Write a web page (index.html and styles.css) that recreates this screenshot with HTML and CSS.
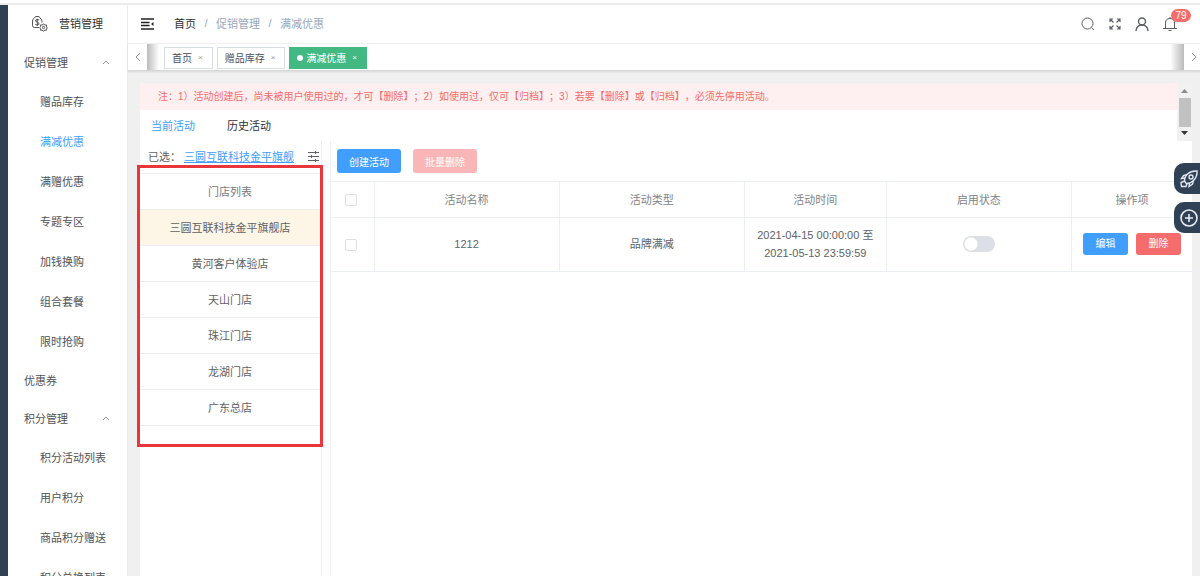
FILE: index.html
```
<!DOCTYPE html>
<html lang="zh-CN">

<head>
    <meta charset="UTF-8">
    <meta name="viewport" content="width=device-width, initial-scale=1.0">
    <title>满减优惠</title>
    <link rel="stylesheet" href="styles.css">
</head>

<body>
    <div class="app">
        <div class="rail"></div>
        <!-- 左侧菜单 -->
        <nav class="sidebar">
            <div class="logo">
                <svg width="17" height="17" viewBox="0 0 17 17" fill="none" stroke="#555" stroke-width="1">
                    <path d="M8 12.500H3.500Q1.500 12.500 1.500 10.500V6Q1.500 4 3.500 3L4.500 1.500H8L9 3Q11 4 11 6.500V7.500" />
                    <path d="M8.300 5Q6.300 4 4.800 5Q4 6.500 6.300 7.200Q8.800 8 7.800 9.500Q6.300 10.500 4.300 9.500M6.300 3.500V11" />
                    <circle cx="12.500" cy="12.500" r="1.200" />
                    <path d="M12.500 9L14 10H15.500V12L16.300 12.800L15.500 14V15.200H14L12.500 16.200L11 15.200H9.500V13.800L8.800 12.600L9.500 11.500V10H11Z" />
                </svg>
                <span>营销管理</span>
            </div>
            <ul class="menu">
                <li>
                    <a class="menu-title" href="#">促销管理<svg width="8" height="5" viewBox="0 0 8 5"><path d="M1 4L4 1L7 4" /></svg></a>
                    <ul>
                        <li><a href="#">赠品库存</a></li>
                        <li><a class="active" href="#">满减优惠</a></li>
                        <li><a href="#">满赠优惠</a></li>
                        <li><a href="#">专题专区</a></li>
                        <li><a href="#">加钱换购</a></li>
                        <li><a href="#">组合套餐</a></li>
                        <li><a href="#">限时抢购</a></li>
                    </ul>
                </li>
                <li><a class="menu-title" href="#">优惠券</a></li>
                <li>
                    <a class="menu-title" href="#">积分管理<svg width="8" height="5" viewBox="0 0 8 5"><path d="M1 4L4 1L7 4" /></svg></a>
                    <ul>
                        <li><a href="#">积分活动列表</a></li>
                        <li><a href="#">用户积分</a></li>
                        <li><a href="#">商品积分赠送</a></li>
                        <li><a href="#">积分兑换列表</a></li>
                    </ul>
                </li>
            </ul>
        </nav>

        <div class="main">
            <!-- 顶部 -->
            <header class="header">
                <button class="icon-btn" type="button" aria-label="折叠菜单">
                    <svg width="13" height="12" viewBox="0 0 13 12" fill="none" stroke="#222" stroke-width="1.400">
                        <path d="M0 1H13M0 4.500H8.500M0 7.500H8.500M0 11H13" />
                        <path d="M12.500 4V8L10 6Z" fill="#222" stroke="none" />
                    </svg>
                </button>
                <div class="crumbs">
                    <a class="home" href="#">首页</a><i>/</i><span>促销管理</span><i>/</i><span>满减优惠</span>
                </div>
                <div class="tools">
                    <button class="icon-btn" type="button" aria-label="搜索">
                        <svg width="14" height="14" viewBox="0 0 14 14" fill="none" stroke="#5a5e66"><circle cx="6.500" cy="6.500" r="5.500" /><path d="M10.500 10.500L13 13" /></svg>
                    </button>
                    <button class="icon-btn" type="button" aria-label="全屏">
                        <svg width="12" height="12" viewBox="0 0 12 12" fill="none" stroke="#5a5e66" stroke-width="1.200"><path d="M1 4V1H4M1 1L4.500 4.500M8 1H11V4M11 1L7.500 4.500M1 8V11H4M1 11L4.500 7.500M8 11H11V8M11 11L7.500 7.500" /></svg>
                    </button>
                    <button class="icon-btn" type="button" aria-label="用户">
                        <svg width="14" height="14" viewBox="0 0 14 14" fill="none" stroke="#5a5e66" stroke-width="1.400"><circle cx="7" cy="4.500" r="3.500" /><path d="M1 14Q1.500 8 7 8Q12.500 8 13 14" /></svg>
                    </button>
                    <button class="icon-btn bell" type="button" aria-label="通知">
                        <svg width="14" height="14" viewBox="0 0 14 14" fill="none" stroke="#5a5e66"><path d="M7 0V1.500M2.500 11.500V6Q2.500 1.500 7 1.500Q11.500 1.500 11.500 6V11.500M0 11.500H14M5.500 13.500H8.500" /></svg>
                        <span class="badge">79</span>
                    </button>
                </div>
            </header>

            <!-- 标签页 -->
            <div class="tags">
                <button class="arrow left" type="button" aria-label="向左"><svg width="6" height="10" viewBox="0 0 6 10"><path d="M5 1L1 5L5 9" /></svg></button>
                <div class="tag-list">
                    <a class="tag" href="#">首页<b>×</b></a>
                    <a class="tag" href="#">赠品库存<b>×</b></a>
                    <a class="tag current" href="#">满减优惠<b>×</b></a>
                </div>
                <button class="arrow right" type="button" aria-label="向右"><svg width="6" height="10" viewBox="0 0 6 10"><path d="M1 1L5 5L1 9" /></svg></button>
            </div>

            <!-- 内容 -->
            <div class="content">
                <div class="top">
                    <div class="top-body">
                        <p class="notice">注：1）活动创建后，尚未被用户使用过的，才可【删除】；2）如使用过，仅可【归档】；3）若要【删除】或【归档】，必须先停用活动。</p>
                        <div class="tabs">
                            <a class="active" href="#">当前活动</a>
                            <a href="#">历史活动</a>
                        </div>
                    </div>
                    <div class="scroll">
                        <svg width="7" height="4" viewBox="0 0 7 4"><path d="M0 4L3.500 0L7 4Z" fill="#8a8a8a" /></svg>
                        <div class="thumb"></div>
                        <svg width="7" height="4" viewBox="0 0 7 4"><path d="M0 0L3.500 4L7 0Z" fill="#333" /></svg>
                    </div>
                </div>
                <div class="panels">
                    <div class="shops">
                        <div class="selected">
                            <span>已选：</span><a href="#">三圆互联科技金平旗舰</a>
                            <svg width="11" height="11" viewBox="0 0 11 11" fill="none" stroke="#606266"><path d="M0 1.500H11M0 5.500H11M0 9.500H11M7.500 0V3M3.500 4V7M7.500 8V11" /></svg>
                        </div>
                        <div class="shop-box">
                            <table class="shop-table">
                                <thead>
                                    <tr><th>门店列表</th></tr>
                                </thead>
                                <tbody>
                                    <tr class="current"><td>三圆互联科技金平旗舰店</td></tr>
                                    <tr><td>黄河客户体验店</td></tr>
                                    <tr><td>天山门店</td></tr>
                                    <tr><td>珠江门店</td></tr>
                                    <tr><td>龙湖门店</td></tr>
                                    <tr><td>广东总店</td></tr>
                                </tbody>
                            </table>
                        </div>
                    </div>
                    <div class="list">
                        <div class="actions">
                            <button class="btn primary" type="button">创建活动</button>
                            <button class="btn danger" type="button" disabled>批量删除</button>
                        </div>
                        <table class="data">
                            <colgroup>
                                <col class="c-check">
                                <col class="c-name">
                                <col class="c-type">
                                <col class="c-time">
                                <col class="c-state">
                                <col class="c-ops">
                            </colgroup>
                            <thead>
                                <tr>
                                    <th><input type="checkbox" aria-label="全选"></th>
                                    <th>活动名称</th>
                                    <th>活动类型</th>
                                    <th>活动时间</th>
                                    <th>启用状态</th>
                                    <th>操作项</th>
                                </tr>
                            </thead>
                            <tbody>
                                <tr>
                                    <td><input type="checkbox" aria-label="选择 1212"></td>
                                    <td>1212</td>
                                    <td>品牌满减</td>
                                    <td>2021-04-15 00:00:00 至<br>2021-05-13 23:59:59</td>
                                    <td><input class="switch" type="checkbox" role="switch" aria-label="启用状态"></td>
                                    <td>
                                        <div class="ops">
                                            <button class="btn small primary" type="button">编辑</button>
                                            <button class="btn small danger" type="button">删除</button>
                                        </div>
                                    </td>
                                </tr>
                            </tbody>
                        </table>
                    </div>
                </div>
            </div>
        </div>
    </div>

    <!-- 右侧悬浮按钮 -->
    <div class="float">
        <button type="button" aria-label="快速入口">
            <svg width="20" height="20" viewBox="0 0 20 20" fill="none" stroke="#dfe6ef" stroke-width="1.400">
                <path d="M6 13Q4.500 9 8.500 5Q12.500 1.500 18 2Q18.500 7.500 14.500 11.500Q11 15 7.500 14.500Z" />
                <circle cx="12" cy="8" r="2" />
                <path d="M6 9L2.500 9.500L4.500 6.500L8 5.500M10.500 14L10 17.500L13.500 15L14.500 11.500M5.500 12L2 13.500L2.500 17.500L7 17.500L8 14.500" />
            </svg>
        </button>
        <button type="button" aria-label="新增">
            <svg width="20" height="20" viewBox="0 0 20 20" fill="none" stroke="#e8edf3" stroke-width="1.600"><circle cx="10" cy="10" r="8" /><path d="M6 10H14M10 6V14" /></svg>
        </button>
    </div>
</body>

</html>
```
FILE: styles.css
```
* {
    margin: 0;
    padding: 0;
    box-sizing: border-box;
    list-style: none;
}

body {
    font-family: "Liberation Sans", "Noto Sans CJK SC", sans-serif;
    font-size: 11px;
    color: #606266;
    background: #fff;
    overflow: hidden;
}

a {
    color: inherit;
    text-decoration: none;
}

button {
    font: inherit;
    color: inherit;
    border: 0;
    background: none;
    cursor: pointer;
}

svg {
    display: block;
    flex: none;
}

.app {
    display: flex;
    height: 100vh;
    padding-top: 3px;
}

.rail {
    flex: none;
    width: 8px;
    background: #304156;
    border-top: 2px solid #ebebeb;
}

/* 左侧菜单 */
.sidebar {
    flex: none;
    width: 120px;
    border-top: 2px solid #ebebeb;
    border-right: 1px solid #ececec;
    overflow: hidden;
}

.logo {
    display: flex;
    align-items: center;
    gap: 11px;
    height: 36px;
    padding-left: 23px;
    color: #303133;
}

.menu {
    padding-top: 2px;
}

.menu a {
    display: flex;
    align-items: center;
    height: 40px;
    padding-left: 32px;
    color: #505256;
}

.menu .menu-title {
    justify-content: space-between;
    height: 38px;
    padding: 0 17px 0 16px;
}

.menu .active {
    color: #409eff;
}

.menu svg,
.arrow svg {
    fill: none;
    stroke: #909399;
}

.main {
    display: flex;
    flex-direction: column;
    flex: 1;
    min-width: 0;
    border-top: 2px solid #ebebeb;
    background: #f0f0f0;
}

/* 顶部 */
.header {
    display: flex;
    flex: none;
    align-items: center;
    height: 38px;
    padding: 0 23px 0 13px;
    background: #fff;
}

.crumbs {
    display: flex;
    flex: 1;
    align-items: center;
    height: 36px;
    margin: 0 0 2px 20px;
    color: #97a8be;
}

.crumbs .home {
    color: #303133;
}

.crumbs i {
    width: 20px;
    text-align: center;
    font-style: normal;
}

.tools {
    display: flex;
    align-items: center;
    gap: 14px;
}

.bell {
    position: relative;
}

.badge {
    position: absolute;
    top: -8px;
    left: 8px;
    width: 20px;
    height: 13px;
    border-radius: 7px;
    background: #f56c6c;
    color: #fff;
    font-size: 10px;
    line-height: 13px;
}

/* 标签页 */
.tags {
    display: flex;
    flex: none;
    height: 28px;
    border-top: 1px solid #f0f0f0;
    border-bottom: 1px solid #d6d6d6;
    background: #fff;
    box-shadow: 0 1px 2px rgba(0, 0, 0, .1);
}

.arrow {
    display: flex;
    flex: none;
    align-items: center;
    justify-content: center;
    width: 19px;
}

.arrow.right {
    width: 16px;
    padding-left: 4px;
}

.tag-list {
    display: flex;
    flex: 1;
    align-items: center;
    gap: 4px;
    padding: 1px 17px 0;
    background: linear-gradient(to right, #bbb, #fff 12px, #fff calc(100% - 14px), #bbb);
}

.tag {
    display: flex;
    align-items: center;
    gap: 6px;
    height: 22px;
    padding: 0 9px 0 7px;
    border: 1px solid #d8dce5;
    background: #fff;
    color: #495060;
    font-size: 10px;
}

.tag b {
    color: #999;
    font-size: 8px;
    font-weight: normal;
}

.tag.current {
    border-color: #42b983;
    background: #42b983;
    color: #fff;
}

.tag.current b {
    color: #fff;
}

.tag.current::before {
    content: "";
    width: 6px;
    height: 6px;
    margin-right: -3px;
    border-radius: 50%;
    background: #fff;
}

/* 内容 */
.content {
    display: flex;
    flex: 1;
    flex-direction: column;
    margin: 12px 8px 0 12px;
    background: #fff;
}

.top {
    display: flex;
    height: 58px;
}

.top-body {
    flex: 1;
}

.notice {
    height: 27px;
    padding-left: 18px;
    background: #fef0f0;
    color: #f56c6c;
    font-size: 10px;
    line-height: 27px;
    text-spacing-trim: space-all;
}

.tabs {
    display: flex;
    gap: 32px;
    padding-left: 11px;
    color: #303133;
    line-height: 32px;
}

.tabs .active {
    color: #409eff;
}

.scroll {
    display: flex;
    flex-direction: column;
    align-items: center;
    justify-content: space-between;
    width: 15px;
    padding: 6px 0;
    background: #f1f1f1;
}

.thumb {
    width: 12px;
    height: 29px;
    background: #c1c1c1;
}

.panels {
    display: flex;
    flex: 1;
    gap: 8px;
}

.shops {
    flex: none;
    width: 182px;
    border-right: 1px solid #ebeef5;
}

.selected {
    display: flex;
    align-items: center;
    height: 24px;
    padding: 6px 2px 0 8px;
    white-space: nowrap;
}

.selected a {
    margin-left: 3px;
    color: #409eff;
    text-decoration: underline;
}

.selected svg {
    margin-left: auto;
}

.shop-box {
    height: 282px;
    margin: 0 -2px 0 -3px;
    padding-top: 5px;
    border: 3px solid #e8363b;
}

table {
    width: 100%;
    border-collapse: collapse;
    text-align: center;
}

th {
    color: #909399;
    font-weight: normal;
}

.shop-table th,
.shop-table td {
    height: 36px;
    padding-bottom: 2px;
    border-top: 1px solid #ebeef5;
    border-bottom: 1px solid #ebeef5;
}

.shop-table th {
    color: #77797d;
}

.shop-table .current {
    background: #fdf5e6;
}

.list {
    flex: 1;
    border-left: 1px solid #ebeef5;
}

.actions {
    display: flex;
    gap: 12px;
    height: 40px;
    padding: 8px 0 8px 6px;
}

.btn {
    width: 64px;
    border-radius: 3px;
    color: #fff;
    font-size: 10px;
}

.primary {
    background: #409eff;
}

.danger {
    background: #f56c6c;
}

.btn:disabled {
    background: #fab6b6;
}

.data {
    table-layout: fixed;
}

.data th {
    height: 36px;
    padding-bottom: 2px;
    color: #808388;
}

.data td {
    height: 54px;
    padding-bottom: 2px;
    line-height: 18px;
}

.data th,
.data td {
    border: 1px solid #ebeef5;
    border-right: 0;
}

.data th:first-child,
.data td:first-child {
    padding: 0 2px 0 0;
    border-left: 0;
}

.c-check {
    width: 5%;
}

.c-name,
.c-type,
.c-state {
    width: 21.5%;
}

.c-time {
    width: 16.5%;
}

.c-ops {
    width: 14%;
}

.data input {
    appearance: none;
    display: block;
    width: 12px;
    height: 12px;
    margin: 0 auto;
    border: 1px solid #dcdfe6;
    border-radius: 2px;
    background: #fff;
}

.data .switch {
    width: 32px;
    height: 16px;
    border: 0;
    border-radius: 8px;
    background: radial-gradient(circle at 8px 8px, #fff 6px, #dcdfe6 7px);
}

.ops {
    display: flex;
    justify-content: center;
    gap: 8px;
}

.small {
    width: 45px;
    height: 22px;
}

/* 右侧悬浮按钮 */
.float {
    position: fixed;
    top: 163px;
    right: 0;
    display: grid;
    gap: 8px;
}

.float button {
    width: 26px;
    height: 31px;
    padding-left: 5px;
    border-radius: 10px 0 0 10px;
    background: #304156;
}
```
